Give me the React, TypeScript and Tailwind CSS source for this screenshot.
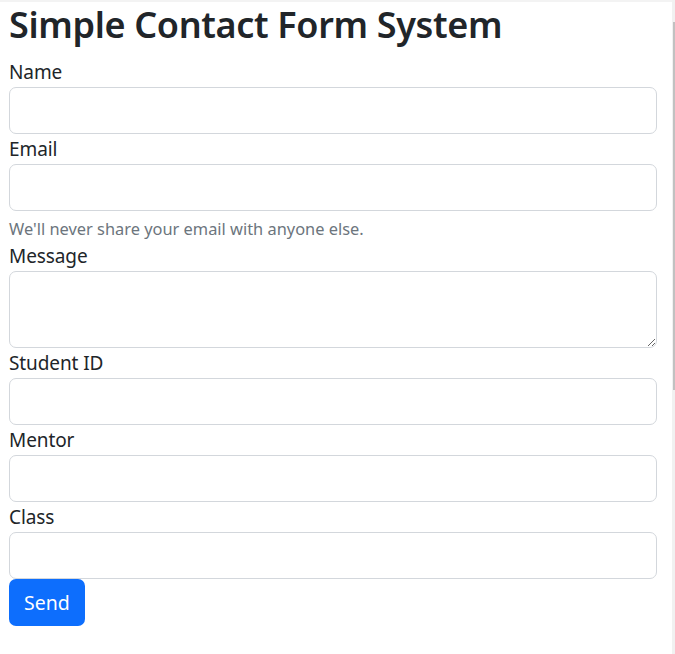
import React from "react";

const font = { fontFamily: '"Noto Sans", "Open Sans", "Liberation Sans", sans-serif' };

function Field({ label, type = "text" }: { label: string; type?: string }) {
  return (
    <div className="flex flex-col">
      <label className="pt-[1px] text-[19px] leading-[29px] tracking-[-0.1px] text-[#212529]">{label}</label>
      <input
        type={type}
        className="h-[47px] w-full rounded-[7px] border border-[#d3d7dc] bg-white px-[15px] text-[20px] outline-none"
      />
    </div>
  );
}

export default function App() {
  return (
    <div className="flex min-h-[654px] w-[675px] bg-white" style={font}>
      <div className="flex-1 border-t-2 border-[#f3f3f3]">
        <form className="flex flex-col pl-[9px] pr-[15px]" onSubmit={(e) => e.preventDefault()}>
          <h1 className="mb-[10px] text-[36px] font-semibold leading-[45px] tracking-[-0.35px] text-[#212529]">
            Simple Contact Form System
          </h1>
          <Field label="Name" />
          <Field label="Email" type="email" />
          <div className="mt-[5px] text-[16.4px] leading-[25px] text-[#6c757d]">
            We'll never share your email with anyone else.
          </div>
          <div className="flex flex-col">
            <label className="pt-[1px] text-[19px] leading-[29px] tracking-[-0.1px] text-[#212529]">Message</label>
            <textarea className="h-[77px] w-full rounded-[7px] border border-[#d3d7dc] bg-white px-[15px] py-[7px] text-[20px] outline-none" />
          </div>
          <Field label="Student ID" />
          <Field label="Mentor" />
          <Field label="Class" />
          <div>
            <button
              type="submit"
              className="h-[47px] rounded-[7px] bg-[#0d6efd] px-[15px] text-[19.5px] leading-[30px] text-white"
            >
              Send
            </button>
          </div>
        </form>
      </div>
      <div className="flex w-[3px] flex-col bg-[#f1f1f1]">
        <div className="h-[22px]" />
        <div className="ml-[1px] h-[368px] bg-[#c1c1c1]" />
      </div>
    </div>
  );
}
